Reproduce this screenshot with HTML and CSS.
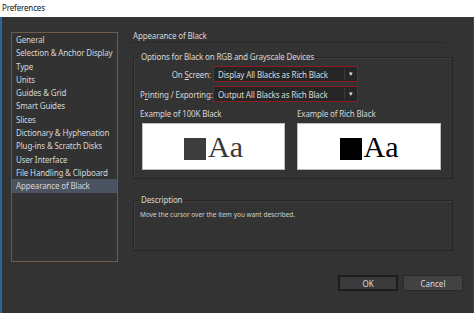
FILE: index.html
```html
<!DOCTYPE html>
<html lang="en">
<head>
    <meta charset="UTF-8">
    <meta name="viewport" content="width=device-width, initial-scale=1.0">
    <title>Preferences</title>
    <link rel="stylesheet" href="styles.css">
</head>
<body>
    <div class="titlebar">Preferences</div>

    <div class="window">
        <ul class="sidebar">
            <li>General</li>
            <li>Selection &amp; Anchor Display</li>
            <li>Type</li>
            <li>Units</li>
            <li>Guides &amp; Grid</li>
            <li>Smart Guides</li>
            <li>Slices</li>
            <li>Dictionary &amp; Hyphenation</li>
            <li>Plug-ins &amp; Scratch Disks</li>
            <li>User Interface</li>
            <li>File Handling &amp; Clipboard</li>
            <li class="active">Appearance of Black</li>
        </ul>

        <div class="main">
            <div class="heading">Appearance of Black</div>

            <fieldset class="group options">
                <legend>Options for Black on RGB and Grayscale Devices</legend>
                <div class="rows">
                    <label>On <u>S</u>creen:</label>
                    <div class="dropdown">
                        <span>Display All Blacks as Rich Black</span>
                        <span class="arrow">&#9662;</span>
                    </div>
                    <label>P<u>r</u>inting / Exporting:</label>
                    <div class="dropdown">
                        <span>Output All Blacks as Rich Black</span>
                        <span class="arrow">&#9662;</span>
                    </div>
                </div>

                <div class="examples">
                    <div class="example">
                        <div class="example-label">Example of 100K Black</div>
                        <div class="swatch">
                            <span class="square k100"></span>
                            <span class="aa k100-text">Aa</span>
                        </div>
                    </div>
                    <div class="example">
                        <div class="example-label">Example of Rich Black</div>
                        <div class="swatch">
                            <span class="square rich"></span>
                            <span class="aa">Aa</span>
                        </div>
                    </div>
                </div>
            </fieldset>

            <fieldset class="group description">
                <legend>Description</legend>
                <p>Move the cursor over the item you want described.</p>
            </fieldset>

            <div class="buttons">
                <button class="btn default">OK</button>
                <button class="btn">Cancel</button>
            </div>
        </div>
    </div>
</body>
</html>
```

FILE: styles.css
```css
*{
    margin: 0;
    padding: 0;
    box-sizing: border-box;
    list-style: none;
}

body{
    width: 474px;
    height: 313px;
    overflow: hidden;
    font-family: "Noto Sans", "Open Sans", sans-serif;
    font-size: 8px;
    letter-spacing: -0.15px;
    color: #d6d6d6;
    background-color: #333;
}

.titlebar{
    height: 17px;
    line-height: 16px;
    padding-left: 2px;
    background-color: #fff;
    color: #111;
    font-size: 8px;
}

.window{
    height: 296px;
    display: flex;
    background-color: #333333;
    border-left: 2px solid #2b679b;
    border-right: 1px solid #474747;
}

.sidebar{
    margin: 15px 0 0 9px;
    width: 107px;
    height: 230px;
    border: 1px solid #6f5b46;
    background-color: #323232;
}

.sidebar li{
    height: 13.3px;
    line-height: 13.3px;
    padding-left: 4px;
    white-space: nowrap;
}

.sidebar li.active{
    background-color: #4b5260;
}

.main{
    margin-left: 15px;
    width: 330px;
    display: flex;
    flex-direction: column;
}

.heading{
    margin-top: 12px;
    height: 14px;
    line-height: 14px;
    width: 316px;
    border-bottom: 1px solid #2a2a2a;
    margin-left: -3px;
    padding-left: 3px;
}

.group{
    width: 320px;
    border: 1px solid #252525;
    box-shadow: 1px 1px 0 #3e3e3e inset;
    padding: 0 6px;
}

.group legend{
    padding: 0 1px;
    line-height: 12px;
}

.options{
    margin-top: 8px;
    height: 128px;
}

.rows{
    margin-top: 3px;
    display: grid;
    grid-template-columns: 73px 145px;
    row-gap: 4px;
    align-items: center;
}

.rows label{
    text-align: right;
    padding-right: 2px;
    white-space: nowrap;
}

.dropdown{
    height: 16px;
    display: flex;
    align-items: center;
    justify-content: space-between;
    border: 1px solid #8e1d22;
    background-color: #262626;
    padding-left: 4px;
    color: #dcdcdc;
}

.dropdown .arrow{
    width: 12px;
    height: 12px;
    line-height: 12px;
    text-align: center;
    font-size: 7px;
    border-left: 1px solid #3a3a3a;
    margin-right: 1px;
}

.examples{
    margin-top: 6px;
    display: flex;
    gap: 12px;
}

.example-label{
    height: 12px;
    line-height: 12px;
    margin-bottom: 3px;
}

.swatch{
    margin-left: 2px;
    width: 143px;
    height: 47px;
    background-color: #fff;
    border: 1px solid #bdbdbd;
    display: flex;
    align-items: center;
    justify-content: center;
    letter-spacing: 0;
}

.example + .example .swatch{
    margin-left: 0;
    width: 144px;
}

.square{
    width: 22px;
    height: 22px;
    margin-top: 4px;
}

.square.k100{
    background-color: #3d3d3d;
}

.square.rich{
    background-color: #000;
}

.aa{
    font-family: "Liberation Serif", serif;
    font-size: 30px;
    line-height: 30px;
    color: #000;
    margin-left: 2px;
}

.aa.k100-text{
    color: #3a3a3a;
}

.description{
    margin-top: 15px;
    height: 57px;
}

.description p{
    margin-top: 4px;
    font-size: 6.5px;
    letter-spacing: 0;
    color: #cfcfcf;
}

.buttons{
    margin-top: 24px;
    display: flex;
    justify-content: flex-end;
    gap: 5px;
}

.btn{
    width: 60px;
    height: 16px;
    font-family: "Noto Sans", sans-serif;
    font-size: 8px;
    color: #dcdcdc;
    background-color: #424242;
    border: 1px solid #2a2a2a;
}

.btn.default{
    background-color: #3b3b3b;
    border: 2px solid #1c1c1c;
}
```
